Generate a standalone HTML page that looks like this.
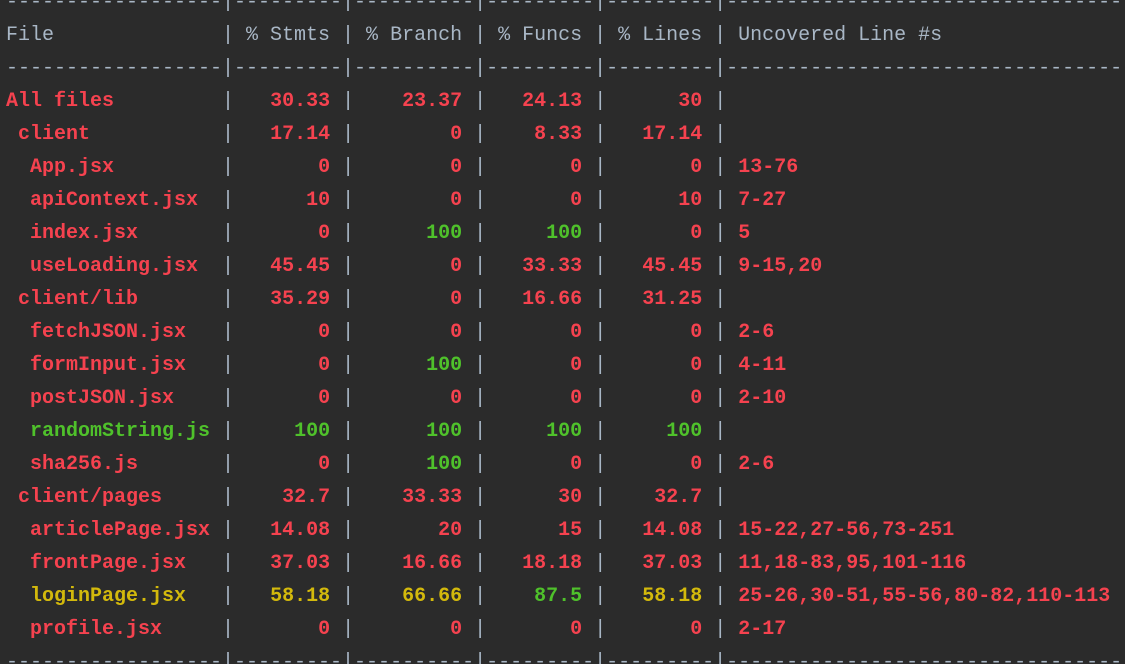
<!DOCTYPE html>
<html><head><meta charset="utf-8"><style>
html,body{margin:0;padding:0;background:#2b2b2b;width:1125px;height:664px;overflow:hidden;position:relative}
pre{margin:0;position:absolute;left:6px;top:-14px;width:1119px;overflow:hidden;font-family:"Liberation Mono",monospace;font-size:20px;line-height:33px;color:#a9b7c6;white-space:pre}
b{font-weight:bold}
.r{color:#f5424f}.g{color:#4fc12b}.y{color:#d3b90c}
</style></head><body><pre>------------------|---------|----------|---------|---------|-----------------------------------------------
File              | % Stmts | % Branch | % Funcs | % Lines | Uncovered Line #s
------------------|---------|----------|---------|---------|-----------------------------------------------
<b class="r">All files         </b>|<b class="r">   30.33 </b>|<b class="r">    23.37 </b>|<b class="r">   24.13 </b>|<b class="r">      30 </b>|
<b class="r"> client           </b>|<b class="r">   17.14 </b>|<b class="r">        0 </b>|<b class="r">    8.33 </b>|<b class="r">   17.14 </b>|
<b class="r">  App.jsx         </b>|<b class="r">       0 </b>|<b class="r">        0 </b>|<b class="r">       0 </b>|<b class="r">       0 </b>|<b class="r"> 13-76</b>
<b class="r">  apiContext.jsx  </b>|<b class="r">      10 </b>|<b class="r">        0 </b>|<b class="r">       0 </b>|<b class="r">      10 </b>|<b class="r"> 7-27</b>
<b class="r">  index.jsx       </b>|<b class="r">       0 </b>|<b class="g">      100 </b>|<b class="g">     100 </b>|<b class="r">       0 </b>|<b class="r"> 5</b>
<b class="r">  useLoading.jsx  </b>|<b class="r">   45.45 </b>|<b class="r">        0 </b>|<b class="r">   33.33 </b>|<b class="r">   45.45 </b>|<b class="r"> 9-15,20</b>
<b class="r"> client/lib       </b>|<b class="r">   35.29 </b>|<b class="r">        0 </b>|<b class="r">   16.66 </b>|<b class="r">   31.25 </b>|
<b class="r">  fetchJSON.jsx   </b>|<b class="r">       0 </b>|<b class="r">        0 </b>|<b class="r">       0 </b>|<b class="r">       0 </b>|<b class="r"> 2-6</b>
<b class="r">  formInput.jsx   </b>|<b class="r">       0 </b>|<b class="g">      100 </b>|<b class="r">       0 </b>|<b class="r">       0 </b>|<b class="r"> 4-11</b>
<b class="r">  postJSON.jsx    </b>|<b class="r">       0 </b>|<b class="r">        0 </b>|<b class="r">       0 </b>|<b class="r">       0 </b>|<b class="r"> 2-10</b>
<b class="g">  randomString.js </b>|<b class="g">     100 </b>|<b class="g">      100 </b>|<b class="g">     100 </b>|<b class="g">     100 </b>|
<b class="r">  sha256.js       </b>|<b class="r">       0 </b>|<b class="g">      100 </b>|<b class="r">       0 </b>|<b class="r">       0 </b>|<b class="r"> 2-6</b>
<b class="r"> client/pages     </b>|<b class="r">    32.7 </b>|<b class="r">    33.33 </b>|<b class="r">      30 </b>|<b class="r">    32.7 </b>|
<b class="r">  articlePage.jsx </b>|<b class="r">   14.08 </b>|<b class="r">       20 </b>|<b class="r">      15 </b>|<b class="r">   14.08 </b>|<b class="r"> 15-22,27-56,73-251</b>
<b class="r">  frontPage.jsx   </b>|<b class="r">   37.03 </b>|<b class="r">    16.66 </b>|<b class="r">   18.18 </b>|<b class="r">   37.03 </b>|<b class="r"> 11,18-83,95,101-116</b>
<b class="y">  loginPage.jsx   </b>|<b class="y">   58.18 </b>|<b class="y">    66.66 </b>|<b class="g">    87.5 </b>|<b class="y">   58.18 </b>|<b class="r"> 25-26,30-51,55-56,80-82,110-113</b>
<b class="r">  profile.jsx     </b>|<b class="r">       0 </b>|<b class="r">        0 </b>|<b class="r">       0 </b>|<b class="r">       0 </b>|<b class="r"> 2-17</b>
------------------|---------|----------|---------|---------|-----------------------------------------------
</pre></body></html>
